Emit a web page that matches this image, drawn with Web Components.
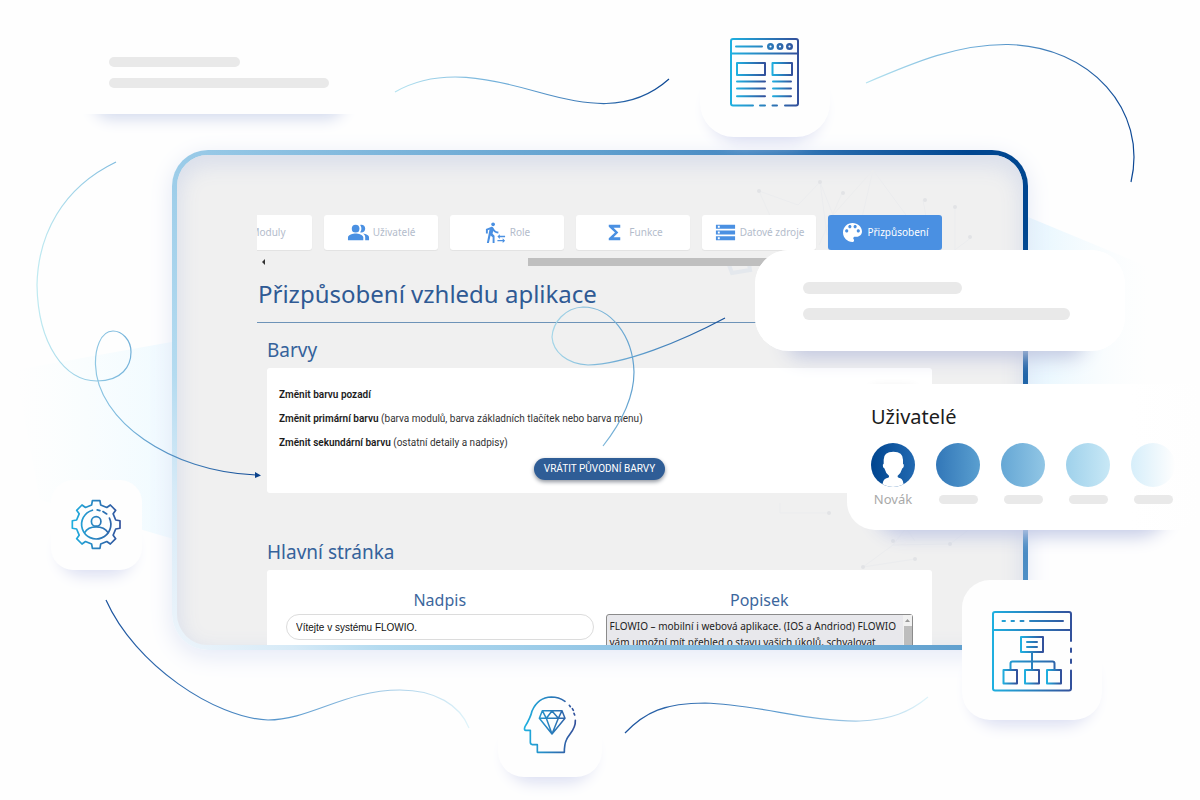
<!DOCTYPE html>
<html lang="cs">
<head>
<meta charset="utf-8">
<meta name="viewport" content="width=device-width, initial-scale=1">
<title>FLOWIO – Přizpůsobení vzhledu aplikace</title>
<style>
  html, body { margin: 0; background: #fefefe; }
  body { font-family: "Noto Sans", "Open Sans", sans-serif; color: #222; }
</style>
</head>
<body>
<flow-stage>
  <flow-screen>
    <flow-tabs>
      <flow-tab icon="modules">Moduly</flow-tab>
      <flow-tab icon="people">Uživatelé</flow-tab>
      <flow-tab icon="role">Role</flow-tab>
      <flow-tab icon="sum">Funkce</flow-tab>
      <flow-tab icon="storage">Datové zdroje</flow-tab>
      <flow-tab icon="palette" active>Přizpůsobení</flow-tab>
    </flow-tabs>
    <flow-heading>Přizpůsobení vzhledu aplikace</flow-heading>
    <flow-section heading="Barvy"><flow-colors></flow-colors></flow-section>
    <flow-section heading="Hlavní stránka"><flow-homepage></flow-homepage></flow-section>
  </flow-screen>

  <flow-curves slot="over"></flow-curves>
  <flow-note slot="over" class="note-top"></flow-note>
  <flow-note slot="over" class="note-side" large></flow-note>
  <flow-badge slot="over" class="b-page" icon="page"></flow-badge>
  <flow-badge slot="over" class="b-gear" icon="gear"></flow-badge>
  <flow-badge slot="over" class="b-head" icon="head"></flow-badge>
  <flow-badge slot="over" class="b-tree" icon="tree"></flow-badge>
  <flow-users slot="over" class="users"></flow-users>
</flow-stage>

<script>
const define = (name, html, setup) => {
  const template = document.createElement('template');
  template.innerHTML = html;
  customElements.define(name, class extends HTMLElement {
    constructor() {
      super();
      this.attachShadow({ mode: 'open' }).append(template.content.cloneNode(true));
    }
    connectedCallback() { if (setup) setup(this, this.shadowRoot); }
  });
};

define('flow-stage', `
<style>
  :host { display: flex; position: relative; overflow: hidden; box-sizing: border-box;
    height: 100vh; min-height: 640px; padding: 150px 172px; }
  .glow { position: absolute; inset: 0; width: 100%; height: 100%; }
  main { flex: 1; min-width: 0; display: flex; position: relative; }
  ::slotted(flow-screen) { flex: 1; min-width: 0; }
  ::slotted([slot=over]) { position: absolute; }
  ::slotted(flow-curves) { inset: 0; }
  ::slotted(.note-top) { left: 79px; top: 14px; width: 280px; height: 100px; }
  ::slotted(.note-side) { right: 75px; top: 250px; width: 370px; height: 101px; }
  ::slotted(.b-page) { right: 370px; top: 10px; width: 130px; height: 127px; --r: 34px; }
  ::slotted(.b-gear) { left: 51px; bottom: 230px; width: 91px; height: 90px; --r: 22px; }
  ::slotted(.b-head) { left: 498px; bottom: 23px; width: 104px; height: 100px; --r: 26px; }
  ::slotted(.b-tree) { right: 98px; bottom: 80px; width: 140px; height: 140px; --r: 28px; }
  ::slotted(.users) { right: 0; top: 384px; width: 353px; }
</style>
<svg class="glow" viewBox="0 0 1200 800" preserveAspectRatio="none" aria-hidden="true">
  <defs>
    <linearGradient id="l"><stop offset="0" stop-color="#f6fdff" stop-opacity="0"/><stop offset="1" stop-color="#effaff"/></linearGradient>
    <linearGradient id="r"><stop offset="0" stop-color="#e4f5fe"/><stop offset=".8" stop-color="#f8fdff" stop-opacity="0"/></linearGradient>
  </defs>
  <path d="M15 370L177 341V540L40 500Z" fill="url(#l)"/>
  <path d="M1028 217L1180 280V420L1028 460Z" fill="url(#r)"/>
</svg>
<main><slot></slot></main>
<slot name="over"></slot>`);

define('flow-screen', `
<style>
  :host { display: flex; flex-direction: column; position: relative; box-sizing: border-box; overflow: hidden;
    padding: 60px 80px 0; border: 5px solid transparent; border-radius: 36px;
    background: linear-gradient(#f0f0f0, #f0f0f0) padding-box,
      linear-gradient(53deg, #eef5fb 0%, #d6eaf7 10%, #b4dbf0 17%, #9acbe8 31%, #5f9fce 65%, #4688c2 77%, #1f63a7 86%, #004690 95%) border-box;
    box-shadow: inset 0 8px 20px 3px #dadfeb, 0 6px 24px #e3e8f6; }
  .net { position: absolute; right: 0; top: 0; width: 300px; height: 440px; }
  .body { position: relative; display: flex; flex-direction: column; }
</style>
<svg class="net" viewBox="0 0 300 440" fill="none" stroke="#ebecee" aria-hidden="true">
  <path d="M36 36L75 50L97 27L110 60M120 36L96 90M150 15L135 80M150 15L183 60M200 45L210 100M232 52V120M249 82L212 110M36 36L60 90M150 15L110 60M97 27L104 80"/>
  <path d="M6 110L9 118L27 115L26 109" stroke="#e4e8ed" stroke-width="4"/>
  <path d="M57 348V358H106M183 373L170 390L140 412M183 373L192 386M170 390L227 389M140 412L192 404M249 372L227 389"/>
  <g fill="#e2e3e6" stroke="none"><circle cx="36" cy="36" r="2"/><circle cx="97" cy="27" r="2"/><circle cx="120" cy="38" r="2"/><circle cx="202" cy="45" r="2"/><circle cx="232" cy="52" r="2"/><circle cx="247" cy="82" r="2"/><circle cx="106" cy="358" r="2"/><circle cx="170" cy="386" r="2"/><circle cx="192" cy="404" r="2"/><circle cx="227" cy="389" r="2"/><circle cx="140" cy="412" r="2"/></g>
</svg>
<div class="body"><slot></slot></div>`);

define('flow-tabs', `
<style>
  :host { display: block; }
  nav { display: flex; gap: 12px; justify-content: flex-end; overflow: hidden; height: 36px; margin-right: 1px; }
  .bar { display: flex; align-items: center; height: 22px; padding-left: 5px; }
  .arrow { width: 3px; height: 6px; background: #333; clip-path: polygon(0 50%, 100% 0, 100% 100%); }
  .thumb { height: 8px; margin-left: auto; width: 61%; background: #bfbfbf; }
</style>
<nav aria-label="Nastavení"><slot></slot></nav>
<div class="bar"><span class="arrow"></span><span class="thumb"></span></div>`);

const tabIcons = {
  modules: '<path d="M4 4h7v7H4zM13 4h7v7h-7zM4 13h7v7H4zM13 13h7v7h-7z"/>',
  people: '<path d="M16.67 13.13C18.04 14.06 19 15.32 19 17v3h4v-3c0-2.18-3.57-3.47-6.33-3.87z"/><circle cx="9" cy="8" r="4"/><path d="M15 12c2.21 0 4-1.79 4-4s-1.79-4-4-4c-.47 0-.91.1-1.33.24C14.5 5.27 15 6.58 15 8s-.5 2.73-1.33 3.76c.42.14.86.24 1.33.24zM9 13c-2.67 0-8 1.34-8 4v3h16v-3c0-2.66-5.33-4-8-4z"/>',
  role: '<path d="M16.49 15.5v-1.75L14 16.25l2.49 2.5V17H22v-1.5zm3.02 4.25H14v1.5h5.51V23L22 20.5 19.51 18zM9.5 5.5c1.1 0 2-.9 2-2s-.9-2-2-2-2 .9-2 2 .9 2 2 2zM5.75 8.9L3 23h2.1l1.75-8L9 17v6h2v-7.55L8.95 13.4l.6-3C10.85 12 12.8 13 15 13v-2c-1.85 0-3.45-1-4.35-2.45l-.95-1.6C9.35 6.35 8.7 6 8 6c-.25 0-.5.05-.75.15L2 8.3V13h2V9.65z"/>',
  sum: '<path d="M18 4H6v2l6.5 6L6 18v2h12v-3h-7l5-5-5-5h7z"/>',
  storage: '<path d="M2 20h20v-4H2zm2-3h2v2H4zM2 4v4h20V4zm4 3H4V5h2zm-4 7h20v-4H2zm2-3h2v2H4z"/>',
  palette: '<path transform="translate(-1.2 -1.2) scale(1.1)" d="M12 3c-4.97 0-9 4.03-9 9s4.03 9 9 9c.83 0 1.5-.67 1.5-1.5 0-.39-.15-.74-.39-1.01-.23-.26-.38-.61-.38-.99 0-.83.67-1.5 1.5-1.5H16c2.76 0 5-2.24 5-5 0-4.42-4.03-8-9-8zm-5.5 9c-.83 0-1.5-.67-1.5-1.5S5.67 9 6.5 9 8 9.67 8 10.5 7.33 12 6.5 12zm3-4C8.67 8 8 7.33 8 6.5S8.67 5 9.5 5s1.5.67 1.5 1.5S10.33 8 9.5 8zm5 0c-.83 0-1.5-.67-1.5-1.5S13.67 5 14.5 5s1.5.67 1.5 1.5S15.33 8 14.5 8zm3 4c-.83 0-1.5-.67-1.5-1.5S16.67 9 17.5 9s1.5.67 1.5 1.5-.67 1.5-1.5 1.5z"/>'
};
define('flow-tab', `
<style>
  :host { display: block; flex: none; }
  button { display: flex; align-items: center; justify-content: center; gap: 3px; width: 114px; height: 35px; padding: 0 0 1px;
    border: 0; border-radius: 3px; background: #fff; box-shadow: 0 1px 1px #e2e2e2;
    font: 10px/16px "Noto Sans", sans-serif; color: #b3bccb; white-space: nowrap; }
  svg { width: 23px; height: 23px; fill: #4a90e2; flex: none; }
  :host([active]) button { background: #4a90e2; color: #fff; }
  :host([active]) svg { fill: #fff; }
</style>
<button type="button"><svg viewBox="0 0 24 24" aria-hidden="true"></svg><slot></slot></button>`,
(host, root) => { root.querySelector('svg').innerHTML = tabIcons[host.getAttribute('icon')]; });

define('flow-heading', `
<style>
  :host { display: block; border-bottom: 1px solid #6d93b8; }
  h1 { margin: 0; padding: 3px 1px 11px; font-size: 24px; line-height: 35px; font-weight: 400; color: #2f5a94; white-space: nowrap; }
</style>
<h1><slot></slot></h1>`);

define('flow-section', `
<style>
  :host { display: block; margin: 0 11px 32px 10px; }
  h2 { margin: 0; padding: 12px 0 2px; font-size: 19px; line-height: 31px; font-weight: 400; color: #35629b; }
  .card { background: #fff; border-radius: 3px; }
</style>
<h2></h2><div class="card"><slot></slot></div>`,
(host, root) => { root.querySelector('h2').textContent = host.getAttribute('heading'); });

define('flow-colors', `
<style>
  :host { display: flex; flex-direction: column; align-items: center; padding: 15px 12px 13px; }
  ul { align-self: stretch; margin: 0; padding: 0; list-style: none; font: 10px/24px Roboto, sans-serif; color: #333; }
  b { color: #1c1c1c; font-weight: 600; }
  button { height: 22px; padding: 0 10px; margin-top: 3px; border: 0; border-radius: 11px; background: #2f5d96; color: #fff;
    font: 10px/22px Roboto, sans-serif; box-shadow: 0 2px 4px #8f959e; white-space: nowrap; }
</style>
<ul>
  <li><b>Změnit barvu pozadí</b></li>
  <li><b>Změnit primární barvu</b> (barva modulů, barva základních tlačítek nebo barva menu)</li>
  <li><b>Změnit sekundární barvu</b> (ostatní detaily a nadpisy)</li>
</ul>
<button type="button">VRÁTIT PŮVODNÍ BARVY</button>`);

define('flow-homepage', `
<style>
  :host { display: grid; grid-template-columns: 1fr 1fr; gap: 12px; padding: 16px 19px 20px; }
  label { display: flex; flex-direction: column; align-items: center; font-size: 16px; line-height: 28px; color: #3c679d; }
  input, textarea { box-sizing: border-box; width: 100%; outline: 0; }
  input { height: 26px; border: 1px solid #dcdcdc; border-radius: 13px; padding: 0 9px; background: #fff;
    font: 10px/16px "Liberation Sans", sans-serif; color: #111; }
  .area { position: relative; align-self: stretch; display: flex; }
  textarea { height: 96px; border: 1px solid #8b8b8b; border-radius: 3px; padding: 3px 12px 3px 3px; background: #e8e8ec; resize: none;
    overflow: hidden; font: 10px/16px "Noto Sans", sans-serif; color: #222; }
  .scroll { position: absolute; right: 1px; top: 1px; bottom: 1px; width: 9px; background: #f1f1f1; display: flex; flex-direction: column; align-items: center; }
  .scroll::before { content: ""; width: 5px; height: 3px; margin: 4px 0; background: #999; clip-path: polygon(50% 0, 100% 100%, 0 100%); }
  .scroll::after { content: ""; width: 8px; height: 50px; background: #bdbdbd; }
</style>
<label>Nadpis<input type="text" value="Vítejte v systému FLOWIO."></label>
<label>Popisek<span class="area"><textarea>FLOWIO – mobilní i webová aplikace. (IOS a Andriod) FLOWIO vám umožní mít přehled o stavu vašich úkolů, schvalovat</textarea><span class="scroll"></span></span></label>`);

define('flow-note', `
<style>
  :host { display: flex; flex-direction: column; gap: 11px; box-sizing: border-box; padding: 43px 30px 0; }
  .bg { position: absolute; inset: 0; background: #fefefe; }
  .bg::before { content: ""; position: absolute; left: 16px; right: 16px; bottom: 0; height: 30px; border-radius: 15px; box-shadow: 0 4px 16px #cfd7ec; }
  .bg::after { content: ""; position: absolute; inset: 0; background: #fefefe; border-radius: inherit; }
  i { position: relative; height: 10px; border-radius: 5px; background: #e9e9e9; }
  i:first-of-type { width: 131px; }
  i:last-of-type { width: 220px; }
  :host([large]) { padding: 32px 48px 0; gap: 14px; }
  :host([large]) .bg { border-radius: 34px; }
  :host([large]) .bg, :host([large]) .bg::after { background: #fff; }
  :host([large]) .bg::before { left: 32px; right: 40px; box-shadow: 0 6px 20px #bfc5df; }
  :host([large]) i { height: 12px; border-radius: 6px; }
  :host([large]) i:first-of-type { width: 159px; }
  :host([large]) i:last-of-type { width: 267px; }
</style>
<div class="bg"></div><i></i><i></i>`);

const gearPath = (cx, cy) => {
  const pts = [];
  for (let k = 0; k < 8; k++) {
    for (const [deg, r] of [[-13, 59], [-9, 71], [9, 71], [13, 59]]) {
      const a = (k * 45 + deg) * Math.PI / 180;
      pts.push((cx + r * Math.cos(a)).toFixed(1) + ' ' + (cy + r * Math.sin(a)).toFixed(1));
    }
  }
  return 'M' + pts.join('L') + 'Z';
};
const gradient = (id, x1, x2) => `<linearGradient id="${id}" gradientUnits="userSpaceOnUse" x1="${x1}" x2="${x2}" y1="0" y2="0"><stop stop-color="#1fb0e0"/><stop offset="1" stop-color="#33509b"/></linearGradient>`;
const badgeIcons = {
  page: { w: 70, h: 70, box: '730 38 70 70', pad: 28, sw: 2, art: `${gradient('a', 731, 798)}${gradient('b', 737, 765)}${gradient('c', 772, 792)}
    <g stroke="url(#a)"><path d="M753 105.5H733Q731 105.5 731 103.5V41Q731 39 733 39H796Q798 39 798 41V103.5Q798 105.5 796 105.5H785M760 105.5H765M772.5 105.5H777M731 53.5H798M736 46.5H762"/><g stroke-width="2.4"><circle cx="770.5" cy="46.5" r="2.3"/><circle cx="780" cy="46.5" r="2.3"/><circle cx="789.5" cy="46.5" r="2.3"/></g></g>
    <path stroke="url(#b)" d="M737 63H765V75H737ZM737 81.5H765M737 88.5H765M737 96.3H765"/>
    <path stroke="url(#c)" d="M772.5 63H792V75H772.5ZM773 81.5H791M773 88.5H791M773 96.3H791"/>` },
  tree: { w: 82, h: 82, box: '991 610 82 82', pad: 30, sw: 2, art: `${gradient('a', 992, 1072)}${gradient('b', 1003, 1017)}${gradient('c', 1025, 1039)}${gradient('d', 1047, 1061)}${gradient('e', 1021, 1043)}
    <path stroke="url(#a)" d="M1071 641V614Q1071 612 1069 612H995Q993 612 993 614V688.5Q993 690.5 995 690.5H1069Q1071 690.5 1071 688.5V670.5M1071 648.5V652M1071 659.5V663M993 630H1071M1002.500 621H1005M1011.5 621H1014M1020.5 621H1023.5M1030 621H1063M1032 652V669.5M1010.5 669V663.5Q1010.5 661.5 1012.5 661.5H1052.5Q1054.5 661.5 1054.5 663.5V669"/>
    <path stroke="url(#e)" d="M1021 637H1043V652H1021ZM1027 642H1037M1027 647H1037"/>
    <path stroke="url(#b)" d="M1003.5 670H1017V683.5H1003.5Z"/><path stroke="url(#c)" d="M1025 670H1039V683.5H1025Z"/><path stroke="url(#d)" d="M1047 670H1061V683.5H1047Z"/>` },
  gear: { w: 51, h: 51, box: '215 568 150 150', pad: 19, sw: 5, art: `${gradient('a', 218, 362)}
    <g stroke="url(#a)"><path d="${gearPath(289, 643)}"/><path d="M278 601A43 43 0 1 0 328 624M292 600L300 602M309 605L320 612"/><circle cx="289" cy="634" r="14"/><path d="M255 667Q265 650 289 650Q313 650 324 667"/></g>` },
  head: { w: 54, h: 60, box: '100 45 162 180', pad: 18, sw: 5, art: `${gradient('a', 104, 258)}
    <path stroke="url(#a)" d="M226 64Q207 51 185 51Q145 52 127 93Q123 112 106 140Q102 150 108 151H122V187Q122 193 128 194H143V217H224Q224 193 230 180C236 163 259 150 257 121M239 76L242 80M248 86L251 91M253 100L255 105"/>
    <path stroke="url(#a)" stroke-width="4.5" d="M158 92H217L226 115L187 162L149 115ZM149 115H226M158 92L170 115L187 93L206 115L217 92M170 115L187 162L206 115"/>` }
};
define('flow-badge', `
<style>
  :host { display: flex; justify-content: center; box-sizing: border-box; }
  .shade { position: absolute; inset: 50% 9px 0; border-radius: var(--r); box-shadow: 0 5px 16px #d8dcf1; }
  .card { position: absolute; inset: 0; background: #fefefe; border-radius: var(--r); }
  svg { position: relative; flex: none; fill: none; stroke-linecap: round; stroke-linejoin: round; }
</style>
<div class="shade"></div><div class="card"></div><svg aria-hidden="true"></svg>`,
(host, root) => {
  const icon = badgeIcons[host.getAttribute('icon')];
  const svg = root.querySelector('svg');
  svg.setAttribute('viewBox', icon.box);
  svg.setAttribute('width', icon.w);
  svg.setAttribute('height', icon.h);
  svg.setAttribute('stroke-width', icon.sw);
  host.style.paddingTop = icon.pad + 'px';
  svg.innerHTML = icon.art;
});

define('flow-users', `
<style>
  :host { display: block; box-sizing: border-box; height: 146px; padding: 18px 0 0 24px; }
  .shade { position: absolute; inset: 60px 32px 0 26px; border-radius: 30px; box-shadow: 0 6px 18px #c2c9e5; }
  .lip { position: absolute; left: 26px; top: 6px; width: 40px; height: 20px; box-shadow: 0 0 12px #d4d4d4; }
  .card { position: absolute; inset: 0; background: linear-gradient(90deg, #fff 80%, #fefefe); border-radius: 0 0 26px 28px; }
  h2 { position: relative; margin: 0; font-size: 20px; line-height: 30px; font-weight: 400; color: #1c1c1c; }
  ul { position: relative; display: flex; gap: 21px; margin: 11px 0 0; padding: 0; list-style: none; }
  li { display: flex; flex-direction: column; align-items: center; gap: 8px; width: 44px; flex: none; }
  .dot { width: 44px; height: 44px; border-radius: 22px; background: linear-gradient(90deg, var(--from), var(--to)); overflow: hidden; }
  .name { font-size: 13px; line-height: 16px; margin-top: -4px; color: #a9a9a9; }
  .stub { width: 39px; height: 9px; border-radius: 5px; background: #e9e9e9; }
</style>
<div class="lip"></div><div class="shade"></div><div class="card"></div>
<h2>Uživatelé</h2>
<ul>
  <li><svg class="dot" style="--from:#00458f;--to:#2269b1" viewBox="0 0 132 132" fill="#fff" aria-hidden="true"><path d="M38 50Q38 26 67 26Q96 26 96 50V62Q100 64 98 71Q96 76 94 76Q90 91 80 98V102Q82 105 88 106Q98 110 98 132H34Q34 110 46 106Q53 105 54 102V98Q44 91 40 76Q38 76 36 71Q34 64 38 62Z"/></svg><span class="name">Novák</span></li>
  <li><span class="dot" style="--from:#3277b8;--to:#5a9fd0"></span><span class="stub"></span></li>
  <li><span class="dot" style="--from:#65a7d5;--to:#91c6e5"></span><span class="stub"></span></li>
  <li><span class="dot" style="--from:#9fd1eb;--to:#c8e8f6"></span><span class="stub"></span></li>
  <li><span class="dot" style="--from:#d6eefa;--to:#fefefe"></span><span class="stub"></span></li>
</ul>`);

define('flow-curves', `
<style>
  :host { display: block; pointer-events: none; }
  svg { display: block; width: 100%; height: 100%; fill: none; stroke-width: 1.2; }
</style>
<svg viewBox="0 0 1200 800" preserveAspectRatio="none" aria-hidden="true">
  <defs>
    <linearGradient id="a"><stop stop-color="#b5e3f0"/><stop offset=".4" stop-color="#6dacd8"/><stop offset="1" stop-color="#0c4794"/></linearGradient>
    <linearGradient id="c"><stop stop-color="#bfeaf1"/><stop offset=".4" stop-color="#78b6dc"/><stop offset="1" stop-color="#0c4794"/></linearGradient>
    <linearGradient id="d"><stop stop-color="#a5d6e8"/><stop offset=".5" stop-color="#5f9fce"/><stop offset="1" stop-color="#15509a"/></linearGradient>
    <linearGradient id="e"><stop stop-color="#1a529d"/><stop offset=".5" stop-color="#5c9bcf"/><stop offset="1" stop-color="#e0f4fa"/></linearGradient>
  </defs>
  <path stroke="url(#a)" d="M395 92C440 66 492 79 538 92S630 114 669 79"/>
  <path stroke="url(#a)" d="M866 83C915 62 958 44 1008 44.5C1090 46 1148 110 1131 182"/>
  <path stroke="url(#c)" d="M116 162C62 188 38 235 37 285C38 345 65 381 97 381C122 381 131 366 131 352C131 340 122 331 113 331C100 331 95 350 95.5 365C97 420 170 472 256 475"/>
  <path fill="#0b438c" stroke="none" d="M255 472L261 475.5L255 478Z"/>
  <path stroke="url(#d)" d="M603 446C625 418 634 395 634 372C633 335 610 307 583 307C565 308 553 322 552 337C553 352 567 364 588 365C625 364 680 342 725 318"/>
  <path stroke="url(#e)" d="M106 600C135 665 215 718 268 720C310 720 345 690 400 690C435 690 460 705 469 728"/>
  <path stroke="url(#e)" d="M625 733C645 712 665 703 705 703C760 705 810 722 860 721C890 720 910 712 928 697"/>
</svg>`);
</script>
</body>
</html>
